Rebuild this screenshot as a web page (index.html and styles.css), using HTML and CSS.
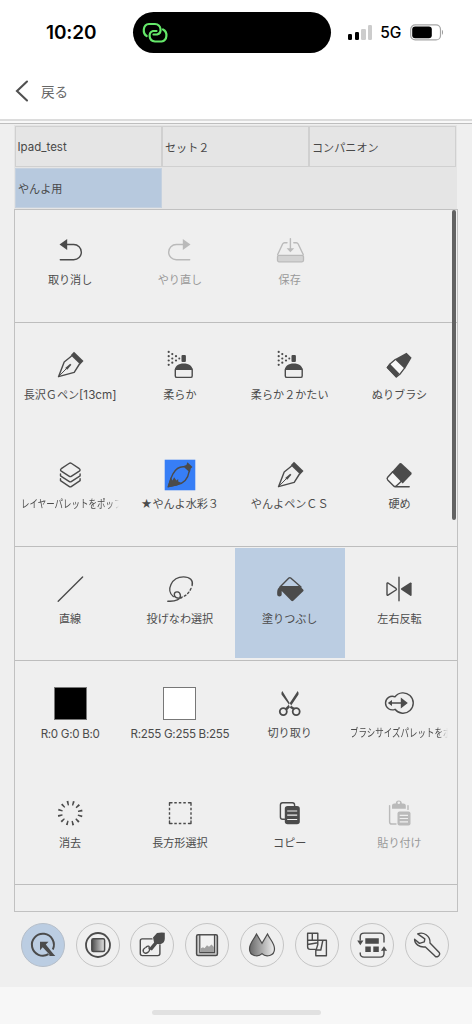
FILE: index.html
```html
<!DOCTYPE html>
<html lang="ja">
<head>
<meta charset="utf-8">
<meta name="viewport" content="width=device-width">
<title>コンパニオン</title>
<link rel="stylesheet" href="styles.css">
</head>
<body>
<svg class="defs" width="0" height="0">
  <defs>
    <linearGradient id="fade" x1="0" x2="1"><stop offset="0" stop-color="#4a4a4a"/><stop offset="1" stop-color="#e6e6e6"/></linearGradient>
    <linearGradient id="drops" x1="0" x2="1"><stop offset="0" stop-color="#686868"/><stop offset="1" stop-color="#efefef"/></linearGradient>
    <symbol id="undo" viewBox="0 0 32 32"><path class="f" d="M5.5 9.5 13.2 4v11z"/><path class="s" d="M12 9.500h7.700a7.600 7.600 0 0 1 0 15.300H6.300"/></symbol>
    <symbol id="pen" viewBox="0 0 32 32"><path class="f" d="m20 2.800 9.500 9.200-3.300 3.500-9.500-9.300z"/><path class="s" d="M17.300 7.200 10.200 13 4.500 27.700l15.700-4.400 5.300-8.300"/><path class="s thin" d="M4.800 27.300 14 18"/><path class="f" d="m11.200 19 5-4.300 1.200 1.100-4.200 5z"/></symbol>
    <symbol id="spray" viewBox="0 0 32 32"><rect class="f" x="17.500" y="6" width="4.400" height="7" rx="1"/><path class="f" d="M10.800 21c0-4 3.700-6.600 8.900-6.600s8.900 2.600 8.900 6.600z"/><rect class="s" x="11.300" y="19.500" width="16.900" height="8.900" rx="1.500"/><g class="f"><circle cx="4.700" cy="2.900" r="1.100"/><circle cx="4.700" cy="7.200" r="1.100"/><circle cx="4.700" cy="11.500" r="1.100"/><circle cx="4.700" cy="15.800" r="1.100"/><circle cx="8.300" cy="5.100" r="1.100"/><circle cx="8.300" cy="9.500" r="1.100"/><circle cx="8.300" cy="13.700" r="1.100"/><circle cx="12" cy="7.200" r="1.100"/><circle cx="12" cy="11.500" r="1.100"/><circle cx="15.300" cy="9.500" r="1"/></g></symbol>
  </defs>
</svg>

<header class="top">
  <div class="status">
    <span class="time">10:20</span>
    <div class="island">
      <svg width="26" height="22" viewBox="0 0 26 22" fill="none" stroke="#65e86a" stroke-width="2.200" stroke-linecap="round"><path d="M4.700 14C.5 11.500.5 2.500 7 2h6c6.500.5 7.500 9 2 10.500h-3.500"/><path d="M21 7.500c5 2.500 4.500 11-1.500 12H13C6.500 19 6 10.500 11 9h3.500"/></svg>
    </div>
    <div class="signal"><i></i><i></i><i class="off"></i><i class="off"></i></div>
    <span class="net">5G</span>
    <svg class="battery" width="34" height="17" viewBox="0 0 34 17"><rect x=".7" y=".9" width="29.800" height="15" rx="4.500" fill="none" stroke="#a5a5a5" stroke-width="1.200"/><rect x="2.200" y="2.500" width="19.600" height="11.800" rx="3"/><path d="M32 6v4.700c1.300-.4 1.300-4.300 0-4.700z" fill="#999"/></svg>
  </div>
  <a class="back">
    <svg width="14" height="22" viewBox="0 0 14 22"><path d="M12 1.500 2 11l10 9.500" fill="none" stroke="#505050" stroke-width="2.100" stroke-linecap="round"/></svg>
    <span>戻る</span>
  </a>
</header>

<main class="app">
  <nav class="tabs">
    <div class="tab latin-tab">Ipad_test</div><div class="tab">セット２</div><div class="tab">コンパニオン</div>
    <div class="tab on">やんよ用</div>
  </nav>

  <div class="panel">
    <div class="scroll"></div>
    <section class="group">
      <div class="cell"><svg><use href="#undo"/></svg><span>取り消し</span></div>
      <div class="cell dim"><svg class="mirror"><use href="#undo"/></svg><span>やり直し</span></div>
      <div class="cell dim"><svg viewBox="0 0 32 32"><path class="s" d="M13 7.800h-2.500q-1.200 0-1.900 1.200L3.700 19.500M19.800 7.800h2.500q1.200 0 1.900 1.200l5 10.500"/><rect x="3.500" y="20.300" width="26" height="6.500" rx="1.500" fill="#d3d3d3" stroke="currentColor" stroke-width="1.300"/><path class="s" d="M16.400 3.800v10"/><path class="f" d="M12.600 13.300h7.600l-3.800 3.900z"/></svg><span>保存</span></div>
    </section>

    <section class="group">
      <div class="cell"><svg><use href="#pen"/></svg><span>長沢Ｇペン<b>[13cm]</b></span></div>
      <div class="cell"><svg><use href="#spray"/></svg><span>柔らか</span></div>
      <div class="cell"><svg><use href="#spray"/></svg><span>柔らか２かたい</span></div>
      <div class="cell"><svg viewBox="0 0 32 32"><path class="s" d="m12.300 10.500-5 4.300-3 3.800 9 9.300 3.500-2.600 4.700-6.200"/><path d="m7.800 15.500 5-4.200 7.700 7.600-4.500 5.700z" fill="#f8f8f8"/><path class="f" d="m23.500 3.700 5.100 5-6.700 11.200-10.200-9.600zM3.600 18.500l3-4 9.800 10-3.200 4.100z"/></svg><span>ぬりブラシ</span></div>
      <div class="cell"><svg viewBox="0 0 32 32"><path class="s" d="m15 4.500-7.700 5.200q-1.500 1.200 0 2.400l7.700 5.100q1.300.9 2.600 0l7.700-5.100q1.500-1.200 0-2.400l-7.700-5.200q-1.300-.9-2.600 0zM6.500 15v1.800l8.500 5.600q1.300.9 2.600 0l8.500-5.600V15M6.500 19.800v1.900L15 27.400q1.300.9 2.600 0l8.500-5.700v-1.900"/></svg><span class="long"><em>レイヤーパレットをポップ</em></span></div>
      <div class="cell"><svg viewBox="0 0 32 32"><path fill="#377ef6" d="M.7.700h30.600v30.600H.7z"/><path class="s" d="M20 7.800c-5-.4-8.500 2.500-11 7L7 19.300 4.300 27.500l8.500-1.700c7-1.500 11.200-6 12.200-13"/><path class="f" d="m6.700 18.500 1.800 3 1.600-3.200 2.300 3.100 1.800-1.500v2.500l3.500 1.500-4.700 2.600-9.500 1.900zM23.400 3.300l5.100 4.800-1.700 1.300-.9 4L19 7.200l3.400-1.300z"/></svg><span>★やんよ水彩３</span></div>
      <div class="cell"><svg><use href="#pen"/></svg><span>やんよペンＣＳ</span></div>
      <div class="cell"><svg viewBox="0 0 32 32"><path d="m9.700 12.700-5 5.600q-1.200 1.300 0 2.600l6 6q1.200 1.200 2.500 0l6.500-4.500z" fill="#f6f6f6"/><path class="s" d="m9.700 12.700-5 5.600q-1.200 1.300 0 2.600l6 6q1.200 1.200 2.500 0l6-5.500M12 27.700h14.200"/><path class="f" d="M16.600 4.300q.9-.8 1.800 0L28.300 13.600q.8.900 0 1.800L19.700 24.500 8.800 13z"/></svg><span>硬め</span></div>
    </section>

    <section class="group">
      <div class="cell"><svg viewBox="0 0 32 32"><path class="s" d="M4.200 28.200 28.600 4"/></svg><span>直線</span></div>
      <div class="cell"><svg viewBox="0 0 32 32"><path class="s" d="M9.300 23.500C1.500 17.500 7.500 3.900 19.500 3.900c6.500 0 10 3.500 8.600 8.600"/><path class="s" d="M27 15.500c-2 4.500-5.500 8-10.500 9" stroke-dasharray="1.800 2.400"/><path class="s" d="M3.800 28.200c8.200.6 13-2 12.600-5.800-.4-4.500-5.800-4.400-6.100-1.100-.3 3.200 3.200 4.500 7.200 3.600"/></svg><span>投げなわ選択</span></div>
      <div class="cell on"><svg viewBox="0 0 32 32"><path class="s" d="m6 14 8.900-8.900q.9-.8 1.800 0L27 14"/><path class="f" d="M7 12.900h18.500l3.700 3.500q.9.900 0 1.800l-9.900 9.600q-1 .9-2 0L7.700 18v3.500c0 2.500-4.500 2.500-4.500 0 0-4.500.2-5.500 2-7.300z"/></svg><span>塗りつぶし</span></div>
      <div class="cell"><svg viewBox="0 0 32 32"><path class="s" d="M4 10.500v11.200q.2.900 1 .5L13 17q.9-.8 0-1.600L5 10q-.8-.4-1 .5zM16 4.200v23.600"/><path class="f" d="M28.600 10.300v12q-.3 1-1.300.5l-9-6q-.9-.7 0-1.500l9-5.700q1-.3 1.300.7z"/></svg><span>左右反転</span></div>
    </section>

    <section class="group">
      <div class="cell"><div class="swatch black"></div><span class="latin">R:0 G:0 B:0</span></div>
      <div class="cell"><div class="swatch"></div><span class="latin">R:255 G:255 B:255</span></div>
      <div class="cell"><svg viewBox="0 0 32 32"><path class="f" d="M8.300 4 17.500 19l3.300 2-1 2.300-3.600-2.300-2-4.500L7.500 7.500q-.5-2 .8-3.500zM23.700 4l-9.200 14-3.500 3.500 1.700 2 3.500-3.500 8.300-12.500q.5-2-.8-3.500z"/><circle class="s bold" cx="9.300" cy="24.600" r="3.500"/><circle class="s bold" cx="22.200" cy="24.600" r="3.500"/></svg><span>切り取り</span></div>
      <div class="cell"><svg viewBox="0 0 32 32"><path class="s" d="M12 9.800a6.800 6.800 0 1 0 0 12.500 10.200 10.200 0 1 0 0-12.500zM7 16h12"/><path class="f" d="m4.800 16 4.200-3v6zM17.800 10.500l7 5.500-7 5.500z"/></svg><span class="long"><em>ブラシサイズパレットをポップ</em></span></div>
      <div class="cell"><svg viewBox="0 0 32 32"><circle cx="16.200" cy="16.100" r="10.200" fill="none" stroke="currentColor" stroke-width="4.500" stroke-dasharray="1.600 3.740" transform="rotate(11 16.200 16.100)"/></svg><span>消去</span></div>
      <div class="cell"><svg viewBox="0 0 32 32"><path class="s" d="M5.500 8.300V5.800h2.500M24.500 5.800h2.500v2.500M27 24v2.500h-2.500M8 26.500H5.500V24"/><path class="s butt" d="M10.300 5.800h13M10.300 26.500h13M5.500 10.800v12M27 10.800v12" stroke-dasharray="2.500 2"/></svg><span>長方形選択</span></div>
      <div class="cell"><svg viewBox="0 0 32 32"><path class="s" d="M10.500 22.300H8.600q-2.200 0-2.200-2.200V7.900q0-2.200 2.200-2.200h9.800q2.200 0 2.200 2.200v1"/><rect class="f" x="10.800" y="9" width="15" height="18.300" rx="2.800"/><path d="M13.200 14h10M13.200 18.200h10M13.200 22.500h10" stroke="#efefef" stroke-width="1.200"/></svg><span>コピー</span></div>
      <div class="cell dim"><svg viewBox="0 0 32 32"><path class="s" d="M6.600 8.600v16.300q0 2.100 2.200 2.100H13M25 8.600v3.800"/><path class="f" d="M9 11.800V8.500q0-2 2.500-2h1.300a3 3 0 0 1 6 0h1.500q2.500 0 2.500 2v3.300z"/><circle cx="15.800" cy="5.800" r="1.300" fill="#efefef"/><rect class="f" x="14.500" y="14.600" width="13" height="14" rx="2"/><path d="M16.700 18.300H25M16.700 21.500H25M16.700 24.800H25" stroke="#efefef" stroke-width="1.200"/></svg><span>貼り付け</span></div>
    </section>
  </div>

  <footer class="dock">
    <div class="tool on"><svg viewBox="0 0 32 32"><path d="M21.500 25.200A11 11 0 1 1 25.800 20.500" fill="none" stroke="currentColor" stroke-width="2"/><path class="f" d="M13 12.700h8.500l-2.700 2.700 7.200 9 2.300 2.500h-5.800l-.3-1.700-6.500-7-2.700 3z"/></svg></div>
    <div class="tool"><svg viewBox="0 0 32 32"><circle class="s bold" cx="16" cy="16" r="12"/><rect x="9.800" y="9.700" width="12.800" height="12.800" rx="1.500" fill="url(#fade)" stroke="currentColor" stroke-width="1.500"/></svg></div>
    <div class="tool"><svg viewBox="0 0 32 32"><path class="s" d="M16 9.900H6.200Q4.300 9.900 4.300 12v12.500q0 2.100 2 2.100h15.500q2.100 0 2.100-2.100V16"/><path class="f" d="M17 8.500 21 4q4-.9 7.800-.3v6q0 4-4.300 5.500l-3.300-.3-5.300 6.500-3.300-1.500 5.500-6.500z"/><path class="s" d="M10 18.200c2-2 4-1 3 .8 2.500 3-3.800 7.500-5.600 3.800-.7-1.800.6-3.300 1.500-3.800"/></svg></div>
    <div class="tool"><svg viewBox="0 0 32 32"><rect x="5.600" y="5.800" width="20.800" height="20.800" rx="1.500" fill="#ccc" stroke="currentColor" stroke-width="1.500"/><path fill="#f2f2f2" stroke="currentColor" stroke-width="1.200" d="M8.800 5.800h14.700v17.800H8.800z"/><path fill="#a0a0a0" d="M9.500 19.500l2.500-1.300 1.500 1 2.500-3 2 1.500 2.500-2.200 2.400 2.500v5H9.500z"/></svg></div>
    <div class="tool"><svg viewBox="0 0 32 32"><path d="M10.500 5 16 14.300 21.500 5c2.500 5.500 7 9 7 15 0 7-8.500 8.800-12.500 4.700C12 28.800 3.500 27 3.500 20c0-6 4.500-9.500 7-15z" fill="url(#drops)" stroke="currentColor" stroke-width="1.200"/></svg></div>
    <div class="tool"><svg viewBox="0 0 32 32"><path class="s" d="M6.600 4.300h10.200v11.200l-1.500 4.900H9.200q-2.600 0-2.600-2.600zM6.600 11.300h10.200M11.300 4.300v7M6.600 15.500l10.200-1.700M17 11.300h8.400v15.500H14.800v-6l5 .2 2-9.500"/></svg></div>
    <div class="tool"><svg viewBox="0 0 32 32"><path class="s" d="M4.200 11V8q0-3.900 3.900-3.900h16q3.900 0 3.900 3.900v5M28 21.500v2.700q0 3.900-3.900 3.900h-16q-3.900 0-3.900-3.900V24"/><path class="f" d="M1.200 11.500h6.200l-3.100 4.700zM24.900 21.800h6.200L28 17.200zM9.300 9.200h13.500v5.500H9.300zM9.300 17.500h5.500V23H9.300zM17.300 17.500h5.500V23h-5.500z"/></svg></div>
    <div class="tool"><svg viewBox="0 0 32 32"><path class="s" d="M6.700 4.900c5.500-2.300 12.800 1.500 12.300 9.100l9.200 9.500q1.200 1.600-.2 3l-1 .9q-1.500 1-3-.3l-9.600-9.200C8.500 18.700 3.400 15 3.600 10.300L8.500 14.400l4.800-1.600.5-3z"/></svg></div>
  </footer>
</main>
<div class="home"><i></i></div>
</body>
</html>
```
FILE: styles.css
```css
* { box-sizing: border-box; }
body {
  margin: 0;
  width: 472px;
  height: 1024px;
  overflow: hidden;
  display: flex;
  flex-direction: column;
  background: #f7f7f7;
  color: #4b4b4b;
  font-family: Inter, "Noto Sans CJK JP", sans-serif;
}
.defs { position: absolute; }
svg { display: block; flex: none; }
.s { fill: none; stroke: currentColor; stroke-width: 1.4; stroke-linecap: round; stroke-linejoin: round; }
.thin { stroke-width: 1; }
.bold { stroke-width: 1.8; }
.butt { stroke-linecap: butt; }
.f { fill: currentColor; }

/* Status bar and navigation */
.top {
  height: 124px;
  flex: none;
  background: linear-gradient(#fff 119px, #dcdcdc 119px, #dcdcdc 121px, #f8f8f8 121px, #f8f8f8 123px, #bebebe 123px);
}
.status { height: 65px; display: flex; align-items: center; color: #000; }
.time { width: 87px; margin-left: 46px; font-size: 19px; font-weight: 600; letter-spacing: -.1px; }
.island {
  width: 198px;
  height: 41px;
  border-radius: 21px;
  background: #000;
  display: flex;
  align-items: center;
  padding-left: 9px;
}
.signal { margin-left: 17px; height: 15px; display: flex; align-items: flex-end; gap: 2.5px; }
.signal i { width: 4.2px; height: 6px; border-radius: 1.2px; background: #000; }
.signal i:nth-child(2) { height: 8px; }
.signal i:nth-child(3) { height: 11px; }
.signal i:nth-child(4) { height: 15px; }
.signal .off { background: #ccc; }
.net { width: 30px; margin-left: 8px; font-size: 15.5px; font-weight: 500; }
.back { height: 52px; padding-left: 15px; display: flex; align-items: center; gap: 12px; font-size: 13.6px; color: #666; }

/* Tool set tabs */
.app { height: 863px; flex: none; padding: 1px 14px 0; background: #efefef; }
.tabs {
  width: 443px;
  height: 84px;
  padding: 1px 1px 0;
  display: grid;
  grid-template-columns: repeat(3, 147px);
  grid-auto-rows: 42px;
  background: #e5e5e5;
}
.tab {
  width: 146.5px;
  height: 41px;
  border: 1px solid #d0d0d0;
  padding-left: 2px;
  display: flex;
  align-items: center;
  font-size: 11.1px;
  color: #484848;
}
.latin-tab { padding-left: 1.5px; font-size: 11.5px; }
.tab.on { height: 40px; background: #b7c9de; border-color: #c5d1df; }

/* Scrolling grid of commands */
.panel { position: relative; width: 444px; height: 703px; border: 1.5px solid #c1c1c1; }
.scroll { position: absolute; top: 0; right: 1px; width: 4px; height: 310px; border-radius: 2px; background: #626262; z-index: 1; }
.group {
  display: grid;
  grid-template-columns: repeat(4, 109.8px);
  grid-auto-rows: 109.9px;
  padding: 1.6px 0 1.6px .2px;
  border-bottom: 1px solid #bdbdbd;
}
.scroll + .group { padding-top: .4px; }
.cell { min-width: 0; padding-top: 24.5px; display: flex; flex-direction: column; align-items: center; font-size: 11.1px; }
.cell > svg { width: 32px; height: 32px; }
.cell > span { margin-top: 5.6px; height: 16px; line-height: 16px; white-space: nowrap; }
.cell b { font-size: 11.7px; font-weight: 400; }
.cell.on { background: #bbcde2; }
.dim { color: #bababa; }
.dim > span { color: #999; }
.mirror { transform: scaleX(-1); }
.cell > .latin { font-size: 11.6px; letter-spacing: -.3px; margin-top: 6.5px; }
.long { width: 98px; overflow: hidden; mask-image: linear-gradient(90deg, #000 90%, transparent); }
.long em { display: inline-block; font-style: normal; transform: scaleX(.765); transform-origin: 0 50%; }
.swatch { width: 33px; height: 33px; margin-bottom: -1px; border: 1px solid #777; background: #fff; }
.swatch.black { background: #000; }

/* Bottom palette buttons */
.dock { display: flex; gap: 10.9px; padding: 11px 0 0 6.7px; }
.tool { width: 44px; height: 44px; flex: none; border: 1px solid #c5c5c5; border-radius: 50%; display: grid; place-items: center; }
.tool svg { width: 32px; height: 32px; }
.tool.on { background: #bbcde2; border-color: #b5bec9; }

.home { flex: 1; padding-top: 23px; display: flex; justify-content: center; }
.home i { width: 169px; height: 5px; border-radius: 3px; background: #e1e1e1; }
```
